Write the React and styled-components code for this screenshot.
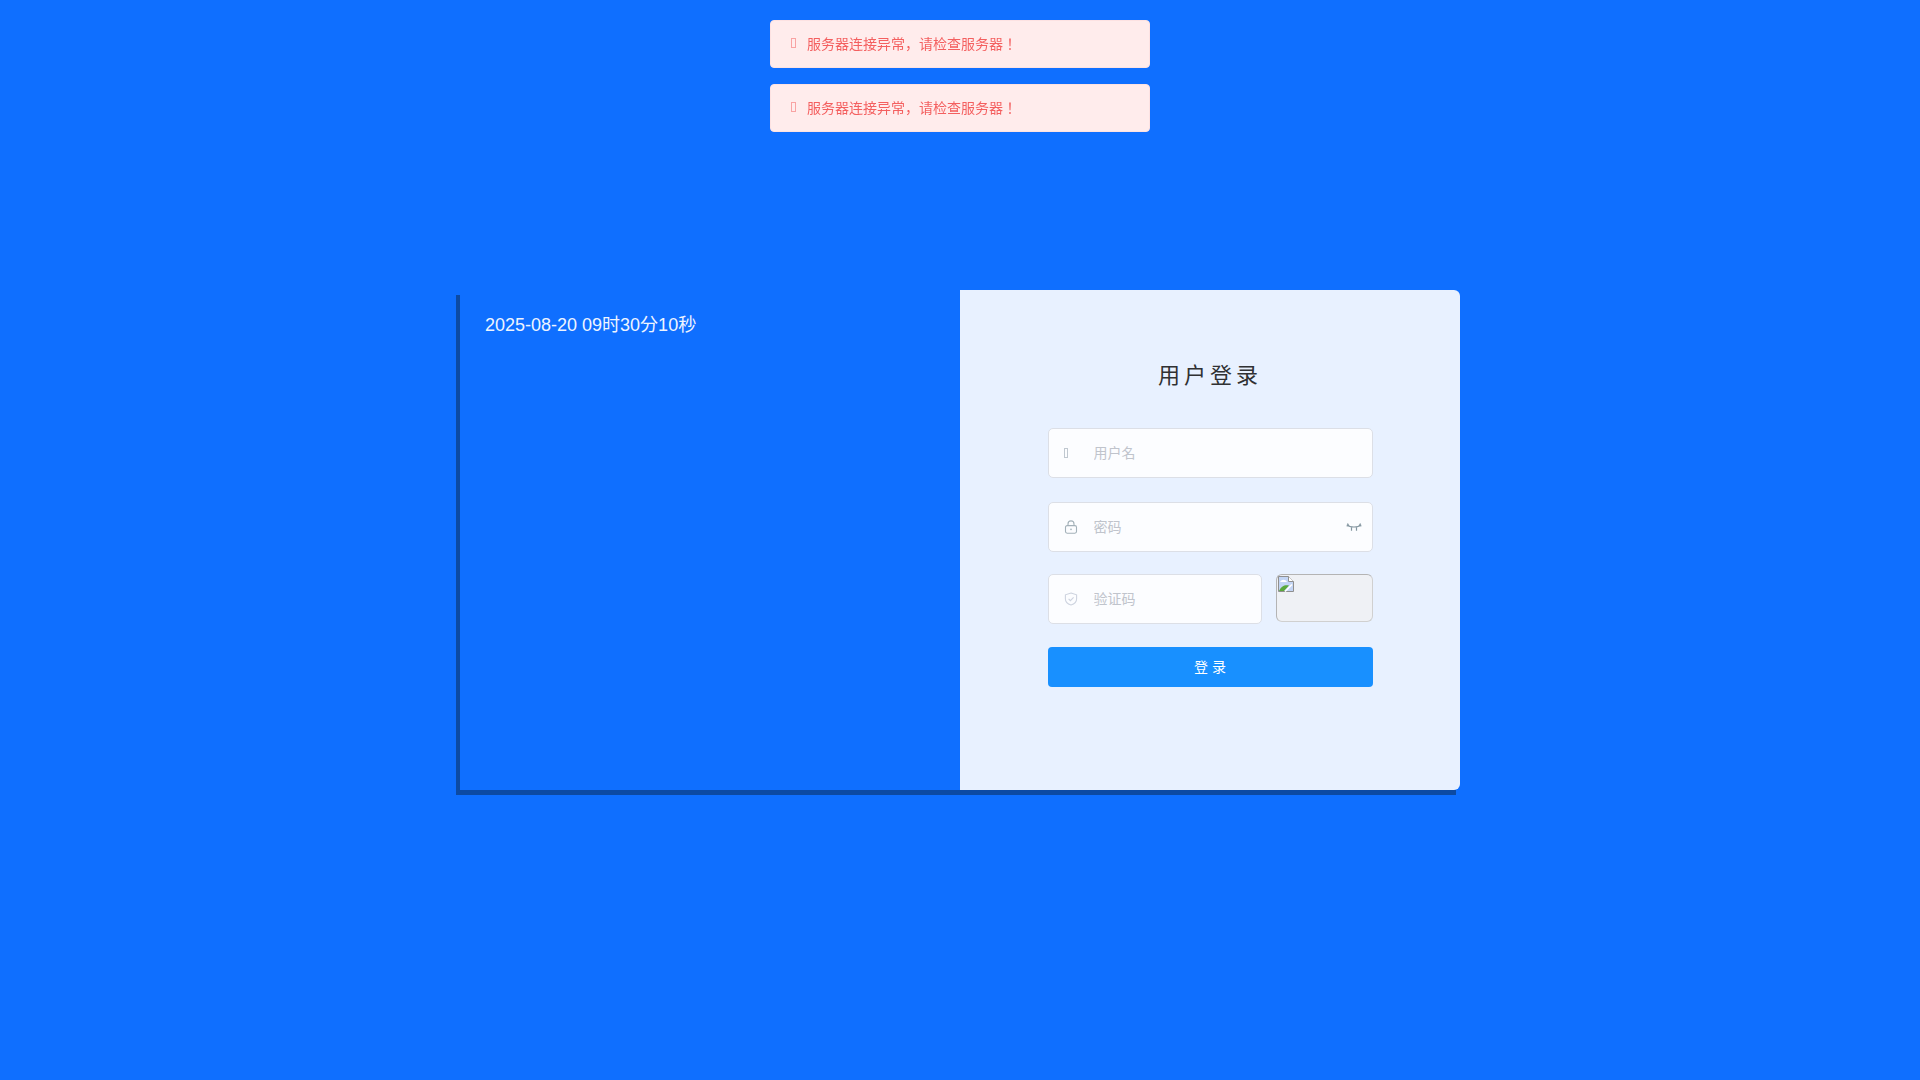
import React from "react";
import styled, { createGlobalStyle } from "styled-components";

const FONT = `"Liberation Sans", "Noto Sans CJK JP", sans-serif`;

const GlobalStyle = createGlobalStyle`
  html, body {
    margin: 0;
    padding: 0;
    height: 100%;
    background: #0f6fff;
    font-family: ${FONT};
  }
  * {
    box-sizing: border-box;
  }
`;

const LockIcon = () => (
  <svg width="14" height="14" viewBox="0 0 14 14" fill="none" stroke="#a3b1b9" strokeWidth="1.1">
    <rect x="1.5" y="5.6" width="11" height="7.6" rx="1.6" />
    <path d="M4 5.6V3.9a3 3 0 0 1 6 0v1.7" />
    <circle cx="7" cy="9.4" r="0.8" fill="#a3b1b9" stroke="none" />
  </svg>
);

const ShieldIcon = () => (
  <svg width="14" height="14" viewBox="0 0 14 14" fill="none" stroke="#cdd3df" strokeWidth="1.1">
    <path d="M7 1 12.6 2.8V7c0 3-2.4 5-5.6 6C3.8 12 1.4 10 1.4 7V2.8Z" />
    <path d="M4.6 6.8 6.4 8.600 9.6 5.4" />
  </svg>
);

const EyeClosedIcon = () => (
  <svg width="16" height="9" viewBox="0 0 16 9" fill="none" stroke="#8496a0" strokeWidth="1.2">
    <path d="M1 1.600C4 4.800 12 4.800 15 1.600" />
    <path d="M.6 3 2.600 2.600M15.400 3 13.400 2.600M1.500.4 2.800 3M14.500.4 13.200 3M5.500 4.200V7.800M10.500 4.200V7.800" />
  </svg>
);

const BrokenImageIcon = () => (
  <svg width="16" height="16" viewBox="0 0 16 16">
    <path d="M.5.5H10.5L15.5 5.5V15.5H.5Z" fill="#c3d5f5" stroke="#8f8f8f" />
    <path d="M10.5.5V5.5H15.5" fill="#fff" stroke="#8f8f8f" />
    <path d="M2 6C4 3 7 3 9 6Z" fill="#fff" />
    <path d="M1 15C3 10 7 8.500 11 9.500L6 15Z" fill="#5aa83c" />
    <path d="M7 15.500 14 8.500" stroke="#fff" strokeWidth="1.600" />
  </svg>
);

const App = () => (
  <>
    <GlobalStyle />
    <Messages>
      <Message>
        <MissingIcon $tone="#f9a3a3" $width={5} $gap={11} $lift={2} />
        <MessageText>服务器连接异常，请检查服务器！</MessageText>
      </Message>
      <Message>
        <MissingIcon $tone="#f9a3a3" $width={5} $gap={11} $lift={2} />
        <MessageText>服务器连接异常，请检查服务器！</MessageText>
      </Message>
    </Messages>
    <Page>
      <LoginBox>
        <LeftPanel>
          <DateTime>2025-08-20 09时30分10秒</DateTime>
        </LeftPanel>
        <RightPanel>
          <Title>用户登录</Title>
          <Form>
            <Field>
              <Prefix>
                <MissingIcon $tone="#c0c8d0" $width={4} />
              </Prefix>
              <Input placeholder="用户名" />
            </Field>
            <PasswordField>
              <Prefix>
                <LockIcon />
              </Prefix>
              <Input placeholder="密码" />
              <Suffix>
                <EyeClosedIcon />
              </Suffix>
            </PasswordField>
            <CaptchaRow>
              <CaptchaField>
                <Prefix>
                  <ShieldIcon />
                </Prefix>
                <Input placeholder="验证码" />
              </CaptchaField>
              <CaptchaImage>
                <BrokenImageIcon />
              </CaptchaImage>
            </CaptchaRow>
            <SubmitButton>登 录</SubmitButton>
          </Form>
        </RightPanel>
      </LoginBox>
    </Page>
  </>
);

const Page = styled.div`
  height: 100vh;
  display: flex;
  align-items: center;
  justify-content: center;
`;

const Messages = styled.div`
  position: fixed;
  top: 20px;
  left: 770px;
  width: 380px;
  display: flex;
  flex-direction: column;
  gap: 16px;
`;

const Message = styled.div`
  height: 48px;
  padding: 0 20px;
  display: flex;
  align-items: center;
  background: #ffecec;
  border: 1px solid #fde2e2;
  border-radius: 4px;
  color: #f45f5f;
  font-size: 14px;
`;

const MessageText = styled.span`
  padding-bottom: 2px;
`;

/* icon font glyph that never loaded, shown as an empty box */
const MissingIcon = styled.i`
  display: block;
  flex-shrink: 0;
  width: ${(p) => p.$width}px;
  height: 10px;
  margin-right: ${(p) => p.$gap || 0}px;
  margin-bottom: ${(p) => p.$lift || 0}px;
  border: 1px solid ${(p) => p.$tone};
`;

const LoginBox = styled.div`
  width: 1000px;
  height: 500px;
  display: flex;
  box-shadow: -4px 5px 0 #0c4aa3;
`;

const LeftPanel = styled.div`
  width: 500px;
  padding: 23px 25px;
  background: #0f6fff;
`;

const DateTime = styled.div`
  font-size: 18px;
  line-height: 24px;
  color: #eef4ff;
`;

const RightPanel = styled.div`
  width: 500px;
  padding-top: 71px;
  display: flex;
  flex-direction: column;
  align-items: center;
  background: #e8f1ff;
  border-radius: 0 6px 6px 0;
`;

const Title = styled.h3`
  margin: 0 0 37px;
  font-size: 22px;
  font-weight: 400;
  line-height: 30px;
  letter-spacing: 4px;
  color: #303133;
`;

const Form = styled.div`
  width: 325px;
  display: flex;
  flex-direction: column;
  gap: 23px;
`;

const Field = styled.div`
  height: 50px;
  display: flex;
  align-items: center;
  background: #fcfdff;
  border: 1px solid #dcdfe6;
  border-radius: 5px;
`;

const PasswordField = styled(Field)`
  margin: 1px 0 -1px;
`;

const CaptchaField = styled(Field)`
  flex: 1;
  min-width: 0;
`;

const Prefix = styled.span`
  width: 45px;
  padding-left: 15px;
  display: flex;
  align-items: center;
  flex-shrink: 0;
`;

const Suffix = styled.span`
  padding-right: 10px;
  display: flex;
  align-items: center;
`;

const Input = styled.input`
  flex: 1;
  min-width: 0;
  height: 100%;
  padding: 0;
  border: 0;
  outline: 0;
  background: transparent;
  font-family: ${FONT};
  font-size: 14px;
  color: #606266;

  &::placeholder {
    color: #c0c4cc;
  }
`;

const CaptchaRow = styled.div`
  display: flex;
  gap: 14px;
`;

const CaptchaImage = styled.div`
  width: 97px;
  height: 48px;
  flex-shrink: 0;
  padding: 1px;
  display: flex;
  align-items: flex-start;
  background: #eff1f5;
  border: 1px solid;
  border-color: #b4b4b4 #d0d0d0 #d0d0d0 #b4b4b4;
  border-radius: 6px;
`;

const SubmitButton = styled.button`
  height: 40px;
  padding: 0 0 2px;
  border: 0;
  border-radius: 4px;
  background: #1890ff;
  color: #fff;
  font-family: ${FONT};
  font-size: 14px;
`;

export default App;
